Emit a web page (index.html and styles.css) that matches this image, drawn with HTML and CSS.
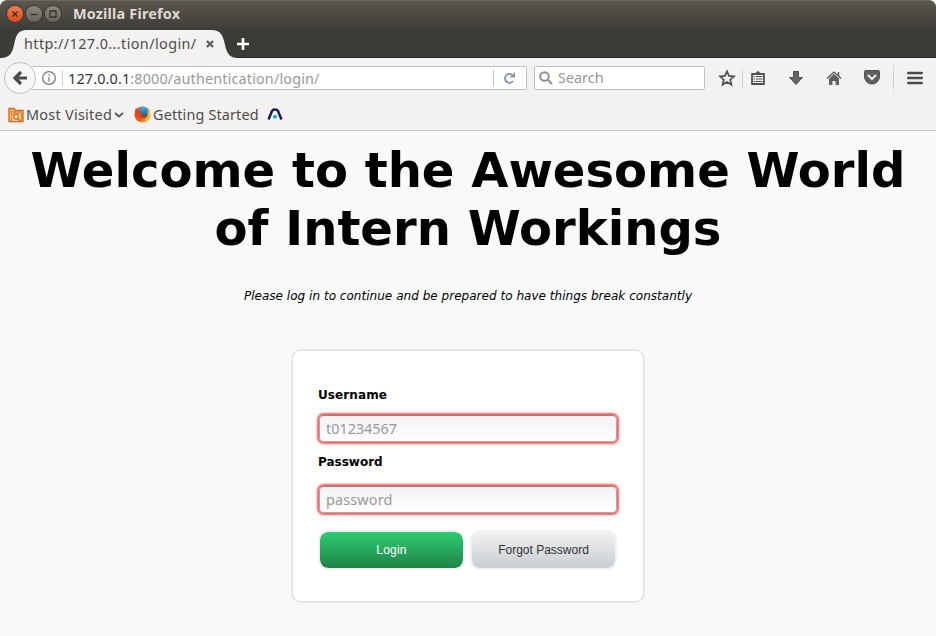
FILE: index.html
```html
<!DOCTYPE html>
<html lang="en">
<head>
<meta charset="utf-8">
<title>Mozilla Firefox</title>
<link rel="stylesheet" href="styles.css">
</head>
<body>
<header class="titlebar">
  <span class="window-button close"><svg width="16" height="16" viewBox="0 0 16 16"><path d="M5.500 5.500l5 5m0-5l-5 5"/></svg></span>
  <span class="window-button"><svg width="16" height="16" viewBox="0 0 16 16"><path d="M4.500 8.500h7"/></svg></span>
  <span class="window-button"><svg width="16" height="16" viewBox="0 0 16 16"><path d="M5 5h6v6H5z"/></svg></span>
  <span class="window-title">Mozilla Firefox</span>
</header>
<div class="tabs">
  <div class="tab">
    <svg class="tab-shape" width="240" height="28" viewBox="0 0 240 28"><path d="M0 28C9 28 12 24 14 15C16 5 18 0 27 0H212C220 0 223 5 225 15C227 24 230 28 238 28Z"/></svg>
    <span class="tab-title">http://127.0...tion/login/</span>
    <svg class="tab-close" width="8" height="8" viewBox="0 0 9 9"><path d="M1 1l7 7m0-7L1 8"/></svg>
  </div>
  <svg class="new-tab" width="14" height="14" viewBox="0 0 14 14"><path d="M7 1v12M1 7h12"/></svg>
</div>
<nav class="toolbar">
  <button class="back" aria-label="Back"><svg width="16" height="16" viewBox="0 0 16 16"><path d="M9 2L3 8l6 6M3 8h12"/></svg></button>
  <div class="address">
    <svg class="info" width="14" height="14" viewBox="0 0 14 14"><circle cx="7" cy="7" r="6.400"/><path d="M7 6v4.500M7 3.200v1.600"/></svg>
    <span class="url"><b>127.0.0.1</b>:8000/authentication/login/</span>
    <span class="reload"><svg width="12" height="12" viewBox="0 0 12 12"><path d="M9 2.700A4.400 4.400 0 1 0 10 9" fill="none" stroke="#8a959f" stroke-width="2"/><path d="M12 0v5.500H6.500z" fill="#8a959f"/></svg></span>
  </div>
  <div class="search">
    <svg width="14" height="14" viewBox="0 0 14 14"><circle cx="5.500" cy="5.500" r="4.300"/><path d="M8.600 8.600L13 13"/></svg>
    <span>Search</span>
  </div>
  <svg class="tool star" width="18" height="18" viewBox="0 0 18 18"><path d="M9 2.300l2 4.600 5 .5-3.800 3.300 1.200 5L9 13.100l-4.400 2.600 1.200-5L2 7.400l5-.5z" fill="none" stroke="#505050" stroke-width="1.700"/></svg>
  <span class="divider"></span>
  <svg class="tool list" width="14" height="16" viewBox="0 0 14 16"><path d="M1 4h12v10H1z" fill="none" stroke="#505050" stroke-width="1.800" stroke-linejoin="round"/><path d="M3 3.500L5 2.700 7 .7l2 2 2 .8z" fill="#505050"/><path d="M2.500 6.500H4M5 6.500h6.500M2.500 9H4M5 9h6.500M2.500 11.500H4M5 11.500h6.500" stroke="#505050" stroke-width="1.200"/></svg>
  <svg class="tool download" width="14" height="14" viewBox="0 0 14 14"><path d="M4.500.5h5v6h4L7 13.500.5 6.500h4z" fill="#666" stroke="#4d4d4d"/></svg>
  <svg class="tool home" width="16" height="14" viewBox="0 0 16 14"><path d="M3 7.500l5-4.500 5 4.500V14H9.500v-4h-3v4H3z" fill="#606060"/><path d="M1 7.500l7-6.400 7 6.400M12.500 1v4" fill="none" stroke="#555" stroke-width="1.400"/></svg>
  <svg class="tool pocket" width="16" height="15" viewBox="0 0 16 15"><path d="M2 .5h12q1.500 0 1.500 1.500v4.500a7.500 7.500 0 0 1-15 0V2Q.5.500 2 .5z" fill="#606060" stroke="#4d4d4d"/><path d="M4 5l4 4 4-4" fill="none" stroke="#f3f2f0" stroke-width="2"/></svg>
  <span class="menu-divider"></span>
  <svg class="tool" width="16" height="14" viewBox="0 0 16 14"><path d="M1.300 2h13.400M1.300 7h13.400M1.300 12h13.400" stroke="#4b4b4b" stroke-width="2.600" stroke-linecap="round"/></svg>
</nav>
<nav class="bookmarks">
  <svg class="folder" width="16" height="16" viewBox="0 0 16 16"><path d="M1 14.500v-13h5l1.500 2H15v11z" fill="#f5b879" stroke="#cf6b19" stroke-width="1.300"/><path d="M1 5h14" fill="none" stroke="#d8762a"/><path d="M3.500 14V6.800h10V14" fill="#f9cf9f" stroke="#d8762a" stroke-width=".8"/><circle cx="8" cy="9.700" r="2.300" fill="#fff0da" stroke="#cf6b19" stroke-width="1.300"/><path d="M9.700 11.400l2.800 2.600" stroke="#cf6b19" stroke-width="1.500"/></svg>
  <span class="most">Most Visited</span>
  <svg class="chevron" width="10" height="6" viewBox="0 0 10 6"><path d="M1 1l4 3.500L9 1"/></svg>
  <svg class="firefox" width="17" height="17" viewBox="0 0 17 17"><defs><linearGradient id="fox" x1="0" y1="0" x2="1" y2="1"><stop stop-color="#e3421b"/><stop offset=".55" stop-color="#ee5b18"/><stop offset="1" stop-color="#ffd52c"/></linearGradient><linearGradient id="globe" x2="0" y2="1"><stop stop-color="#42b6e9"/><stop offset="1" stop-color="#153f85"/></linearGradient></defs><circle cx="8.500" cy="8.500" r="8" fill="url(#fox)"/><circle cx="9.300" cy="6.300" r="5.600" fill="url(#globe)"/><path d="M.8 5L2 2l2 2 2.500.2L6 6l3 1.500-2 1.500c1 2 4 2 6 .2C12 13 7 14 4 11 2 9 1.500 7 .8 5z" fill="#d94b18"/><path d="M14 2.500c3.500 4 2.500 10-3 12.500 2.500-3.500 3-8 3-12.500z" fill="#ffb82c"/></svg>
  <span class="started">Getting Started</span>
  <svg width="16" height="13" viewBox="0 0 16 13"><path d="M1.500 11.500L5 3Q5.700 1.500 8 1.500T11 3l3.500 8.500" fill="none" stroke="#281656" stroke-width="2.500"/><circle cx="8" cy="8.800" r="2" fill="#00b2cf"/></svg>
</nav>
<main>
  <h1>Welcome to the Awesome World of Intern Workings</h1>
  <p class="intro">Please log in to continue and be prepared to have things break constantly</p>
  <form class="login">
    <label for="username">Username</label>
    <input id="username" type="text" placeholder="t01234567">
    <label class="password-label" for="password">Password</label>
    <input id="password" type="password" placeholder="password">
    <div class="actions">
      <button class="submit" type="button">Login</button>
      <button class="forgot" type="button">Forgot Password</button>
    </div>
  </form>
</main>
</body>
</html>
```
FILE: styles.css
```css
* { box-sizing: border-box; }
body { margin: 0; width: 936px; height: 636px; overflow: hidden; background: #f8fafa; color: #000; font-family: "DejaVu Sans", sans-serif; }
svg { display: block; flex: none; }
button, input { font: inherit; margin: 0; }
.titlebar { height: 30px; display: flex; align-items: center; padding: 0 0 3px 7px; gap: 3px; background: linear-gradient(#5a574e, #3e3c37); border-top: 1px solid #6b6860; border-radius: 7px 7px 0 0; font-family: "Noto Sans", sans-serif; }
.window-button { width: 16px; height: 16px; border-radius: 50%; background: linear-gradient(#8b887f, #67645d); box-shadow: 0 0 0 1px #35332f; }
.window-button.close { background: linear-gradient(#f47b52, #dc4a1c); }
.window-button path { fill: none; stroke: #35332f; stroke-width: 1.300; }
.window-title { margin-left: 9px; color: #dfdbd2; font-size: 14.400px; font-weight: 700; line-height: 20px; letter-spacing: .2px; }
.tabs { height: 28px; display: flex; background: #3c3b37; border-bottom: 1px solid #272623; }
.tab { width: 236px; height: 28px; position: relative; display: flex; align-items: center; padding-left: 24px; font: 14.400px/20px "Noto Sans", sans-serif; color: #4c4c4c; }
.tab-shape { position: absolute; left: 0; top: 0; fill: #f3f2f0; }
.tab-title { position: relative; width: 182px; white-space: nowrap; letter-spacing: .4px; }
.tab-close { position: relative; fill: none; stroke: #5b5b59; stroke-width: 2.400; }
.new-tab { margin: 7px 0 0; fill: none; stroke: #fff; stroke-width: 2.600; }
.toolbar { height: 41px; display: flex; align-items: center; padding: 0 0 2px 4px; background: #f3f2f0; font: 14.400px/20px "Noto Sans", sans-serif; }
.back { width: 32px; height: 32px; padding: 0; display: grid; place-items: center; flex: none; position: relative; z-index: 1; border: 1px solid #c3bfba; border-radius: 50%; background: #f8f7f6; }
.back path { fill: none; stroke: #4c4c4c; stroke-width: 3.200; }
.address { height: 24px; width: 496px; margin-left: -5px; padding-left: 10px; flex: none; display: flex; align-items: center; background: #fff; border: 1px solid #c3bfba; border-radius: 2px; }
.info { fill: none; stroke: #757575; stroke-width: 1.200; }
.url { margin-left: 6px; padding-left: 5px; height: 16px; line-height: 17px; flex: 1; color: #999; border-left: 1px solid #ccc; white-space: nowrap; letter-spacing: .15px; }
.url b { color: #333; font-weight: 400; }
.reload { width: 33px; height: 16px; padding-right: 2px; display: grid; place-items: center; border-left: 1px solid #c8c8c8; }
.search { width: 171px; height: 24px; margin-left: 7px; padding-left: 4px; display: flex; align-items: center; gap: 5px; flex: none; color: #999; background: #fff; border: 1px solid #c3bfba; border-radius: 2px; }
.search span { padding-top: 1px; }
.search svg { fill: none; stroke: #8f8f8f; stroke-width: 2; }
.star { margin-left: 13px; }
.divider { width: 1px; height: 18px; margin-left: 6px; background: #d4d2cf; }
.list { margin-left: 8px; }
.download { margin-left: 24px; }
.home { margin-left: 23px; }
.pocket { margin-left: 22px; }
.menu-divider { width: 1px; height: 34px; margin: 0 13px 0; background: linear-gradient(transparent, #ccc 30%, #ccc 70%, transparent); }
.bookmarks { height: 32px; padding-left: 8px; display: flex; align-items: center; background: #f3f2f0; border-bottom: 1px solid #c9c5c5; font: 14.400px/20px "Noto Sans", sans-serif; color: #4c4c4c; white-space: nowrap; }
.most { width: 88px; margin-left: 2px; letter-spacing: .28px; }
.chevron { fill: none; stroke: #555; stroke-width: 1.700; }
.firefox { margin-left: 10px; }
.started { width: 106px; margin: 0 8px 0 2px; letter-spacing: .15px; }
main { padding-top: 10px; display: flex; flex-direction: column; align-items: center; }
h1 { margin: 0; width: 920px; text-align: center; font-size: 48.080px; line-height: 58px; font-weight: 700; }
.intro { margin: 31px 0 0; font-size: 12px; line-height: 16px; font-style: italic; letter-spacing: .03px; }
.login { width: 354px; height: 254px; margin-top: 45px; padding: 34px 25px 0; border: 2px solid #e4e8e7; border-radius: 10px; background: #fff; }
.login label { display: block; height: 20px; font-size: 12px; line-height: 20px; font-weight: 700; letter-spacing: .1px; }
.login input { display: block; width: 298px; height: 27px; margin: 10px 0 0 1px; padding: 0 6px; border: 1px solid #aaa; border-top-color: #888; border-radius: 5px; background: linear-gradient(#f2f2f2, #fff); box-shadow: 0 0 2px 1.500px #ff5c5c; font: 14.400px "Noto Sans", sans-serif; }
.login input::placeholder { color: #999; opacity: 1; }
.login .password-label { margin-top: 10px; letter-spacing: 0; }
.login .password-label + input { margin-top: 14px; letter-spacing: .15px; }
.actions { display: flex; gap: 5px; margin-top: 17px; }
.actions button { width: 147px; height: 40px; padding: 0; border: 2px solid #f0f0f0; border-radius: 10px; font: 12px "Liberation Sans", sans-serif; }
.actions .submit { color: #fff; background: linear-gradient(#2ecc71, #208348) padding-box; letter-spacing: .2px; }
.actions .forgot { color: #333; background: linear-gradient(#f0f1f2, #caced1) padding-box; }
```
